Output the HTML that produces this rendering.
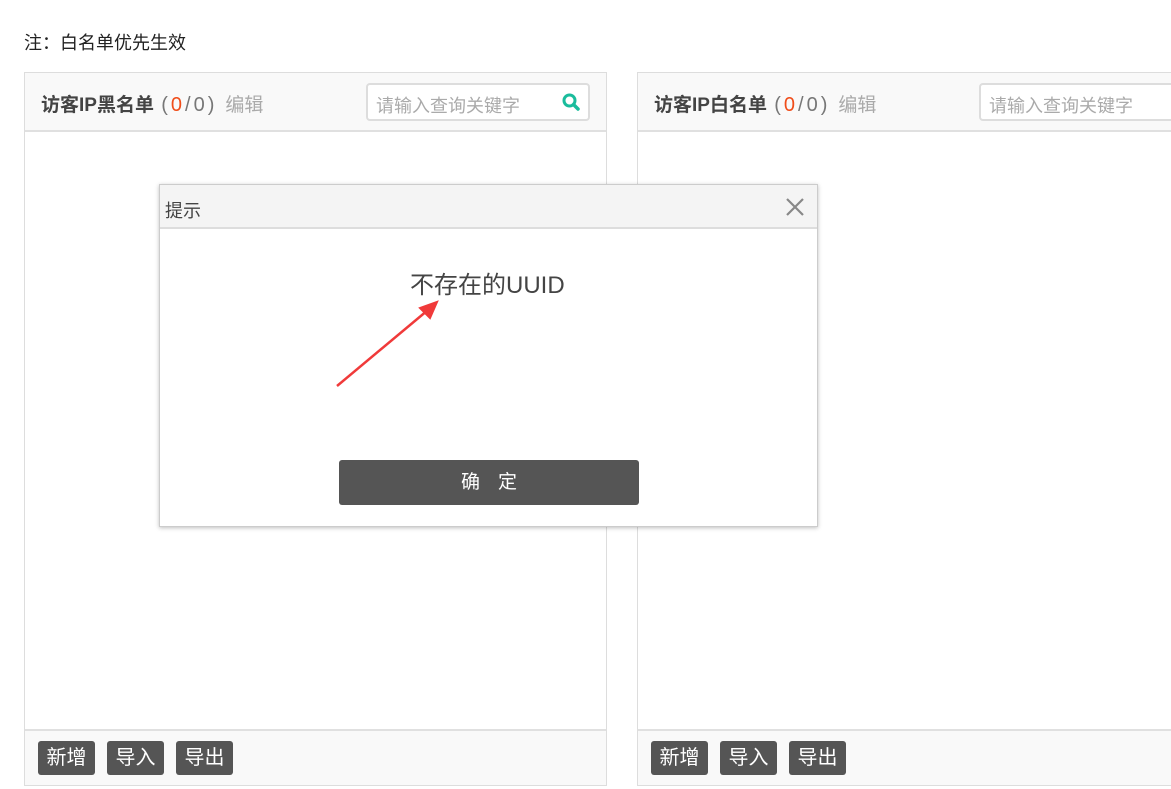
<!DOCTYPE html>
<html><head><meta charset="utf-8"><style>
body{margin:0;width:1171px;height:789px;background:#fff;position:relative;overflow:hidden;font-family:"Liberation Sans","Noto Sans CJK SC",sans-serif;}
.note{position:absolute;left:24px;top:29px;font-size:18px;color:#222;}
.panel{position:absolute;top:72px;width:581px;height:712px;border:1px solid #ddd;background:#fff;}
.hd{height:57px;background:#f9f9f9;border-bottom:2px solid #e0e0e0;position:relative;}
.tt{position:absolute;left:16px;top:17px;font-size:19px;font-weight:bold;color:#444;}
.tt span{font-weight:normal;color:#777;}
.tt .c{letter-spacing:3px;margin-left:2px;font-size:20px}
.tt .r{color:#f04d1a}
.tt .e{color:#aaa;margin-left:8px;letter-spacing:0}
.srch{position:absolute;left:341px;top:10px;width:224px;height:38px;border:2px solid #ddd;border-radius:4px;background:#fff;box-sizing:border-box;font-size:18px;color:#aaa;padding:7px 8px;}
.ft{position:absolute;left:0;right:0;bottom:0;height:54px;background:#f9f9f9;border-top:2px solid #e0e0e0;}
.b{position:absolute;top:10px;height:34px;width:57px;text-align:center;background:#555;color:#fff;border-radius:3px;font-size:20px;line-height:34px;}
.dlg{position:absolute;left:159px;top:184px;width:657px;height:341px;border:1px solid #ccc;background:#fff;box-shadow:0 1px 4px rgba(0,0,0,.25);}
.dh{height:42px;background:#f4f4f4;border-bottom:2px solid #ddd;position:relative;font-size:18px;color:#444;}
.ok{position:absolute;left:179px;top:275px;width:300px;height:45px;background:#555;border-radius:3px;color:#fff;font-size:19px;text-align:center;line-height:45px;letter-spacing:18px;text-indent:18px;}
</style></head><body>
<div class="note">注：白名单优先生效</div>
<div class="panel" style="left:24px">
 <div class="hd"><div class="tt">访客IP黑名单 <span class="c">(<span class="r">0</span>/0)</span><span class="e">编辑</span></div>
 <div class="srch">请输入查询关键字
 <svg style="position:absolute;right:8px;top:8px" width="18" height="18" viewBox="0 0 18 18"><circle cx="7.5" cy="7.5" r="5.5" fill="none" stroke="#1abc9c" stroke-width="3"/><path d="M11.5 11.5L16 16" stroke="#1abc9c" stroke-width="3.5" stroke-linecap="round"/></svg></div></div>
 <div class="ft"><div class="b" style="left:13px">新增</div><div class="b" style="left:82px">导入</div><div class="b" style="left:151px">导出</div></div>
</div>
<div class="panel" style="left:637px">
 <div class="hd"><div class="tt">访客IP白名单 <span class="c">(<span class="r">0</span>/0)</span><span class="e">编辑</span></div>
 <div class="srch">请输入查询关键字</div></div>
 <div class="ft"><div class="b" style="left:13px">新增</div><div class="b" style="left:82px">导入</div><div class="b" style="left:151px">导出</div></div>
</div>
<div class="dlg">
 <div class="dh"><span style="position:absolute;left:5px;top:12px">提示</span>
 <svg style="position:absolute;right:12px;top:12px" width="20" height="20" viewBox="0 0 20 20"><path d="M2 2L18 18M18 2L2 18" stroke="#888" stroke-width="2.2"/></svg></div>
 <div style="position:absolute;left:250px;top:80px;font-size:24px;color:#444">不存在的UUID</div>
 <div class="ok">确定</div>
</div>
<svg style="position:absolute;left:0;top:0" width="1171" height="789"><path d="M337 386L428 310" stroke="#f03a3a" stroke-width="2.5"/><path d="M437 302L420 308L430 318Z" fill="#f03a3a" stroke="#f03a3a" stroke-width="2"/></svg>
</body></html>
